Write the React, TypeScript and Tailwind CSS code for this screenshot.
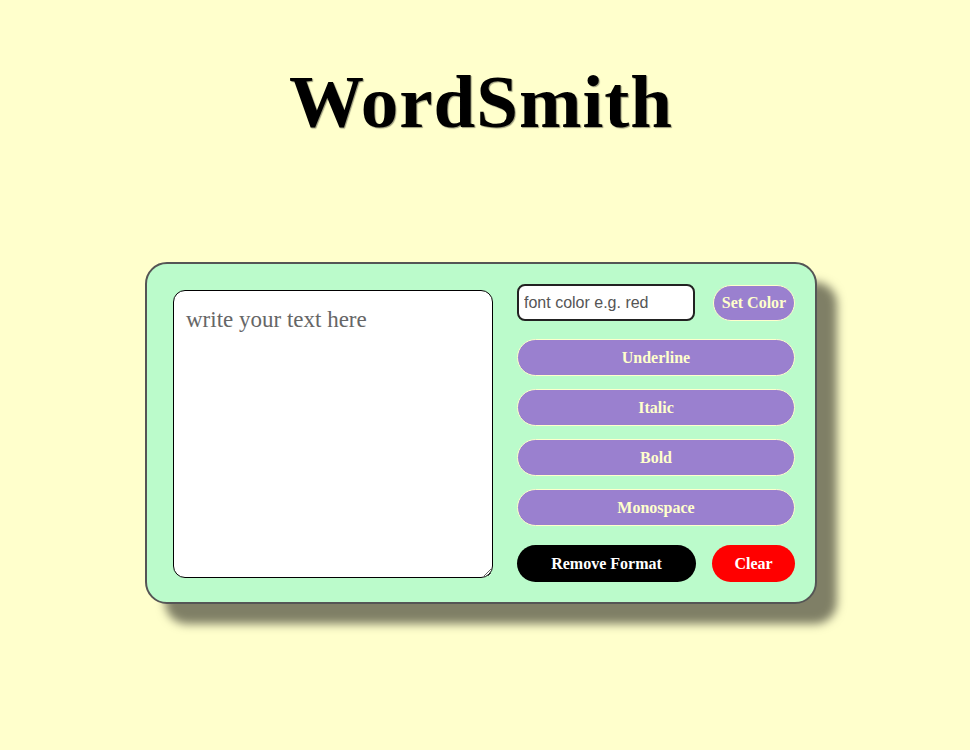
import React from "react";

const purple =
  "h-[37px] w-full rounded-full bg-[#9a80cf] border border-[#ffffcc] text-[#ffffcc] text-[16px] font-bold font-['Liberation_Serif',serif]";

export default function App() {
  return (
    <div className="min-h-screen w-full bg-[#ffffcc] flex flex-col items-center pr-[8px] font-['Liberation_Serif',serif]">
      <h1 className="mt-[62px] text-[75px] leading-[80px] font-bold text-black tracking-[1px] [text-shadow:1px_1px_1px_rgba(0,0,0,0.4)]">
        WordSmith
      </h1>
      <div className="mt-[120px] w-[672px] h-[342px] rounded-[22px] border-2 border-[#555555] bg-[#bbfbcb] shadow-[20px_20px_10px_rgba(0,0,0,0.5)] flex items-start pl-[26px] pr-[20px] pt-[20px]">
        <textarea
          className="mt-[6px] w-[320px] h-[288px] rounded-[12px] border border-black bg-white px-[12px] py-[12px] text-[23px] text-[#555] placeholder:text-[#666] outline-none resize font-['Liberation_Serif',serif]"
          placeholder="write your text here"
        />
        <div className="ml-[24px] w-[278px] flex flex-col">
          <div className="flex items-center justify-between">
            <input
              className="w-[178px] h-[37px] rounded-[8px] border-2 border-[#222] bg-white px-[5px] text-[16px] text-black placeholder:text-[#555] outline-none font-['Liberation_Sans',Arial,sans-serif]"
              placeholder="font color e.g. red"
            />
            <button className="w-[82px] h-[36px] rounded-full bg-[#9a80cf] border border-[#ffffcc] text-[#ffffcc] text-[16px] font-bold font-['Liberation_Serif',serif]">
              Set Color
            </button>
          </div>
          <div className="mt-[18px] flex flex-col gap-[13px]">
            <button className={purple}>Underline</button>
            <button className={purple}>Italic</button>
            <button className={purple}>Bold</button>
            <button className={purple}>Monospace</button>
          </div>
          <div className="mt-[19px] flex items-center justify-between">
            <button className="w-[179px] h-[37px] rounded-full bg-black text-white text-[16px] font-bold font-['Liberation_Serif',serif]">
              Remove Format
            </button>
            <button className="w-[83px] h-[37px] rounded-full bg-[#ff0000] text-white text-[16px] font-bold font-['Liberation_Serif',serif]">
              Clear
            </button>
          </div>
        </div>
      </div>
    </div>
  );
}
